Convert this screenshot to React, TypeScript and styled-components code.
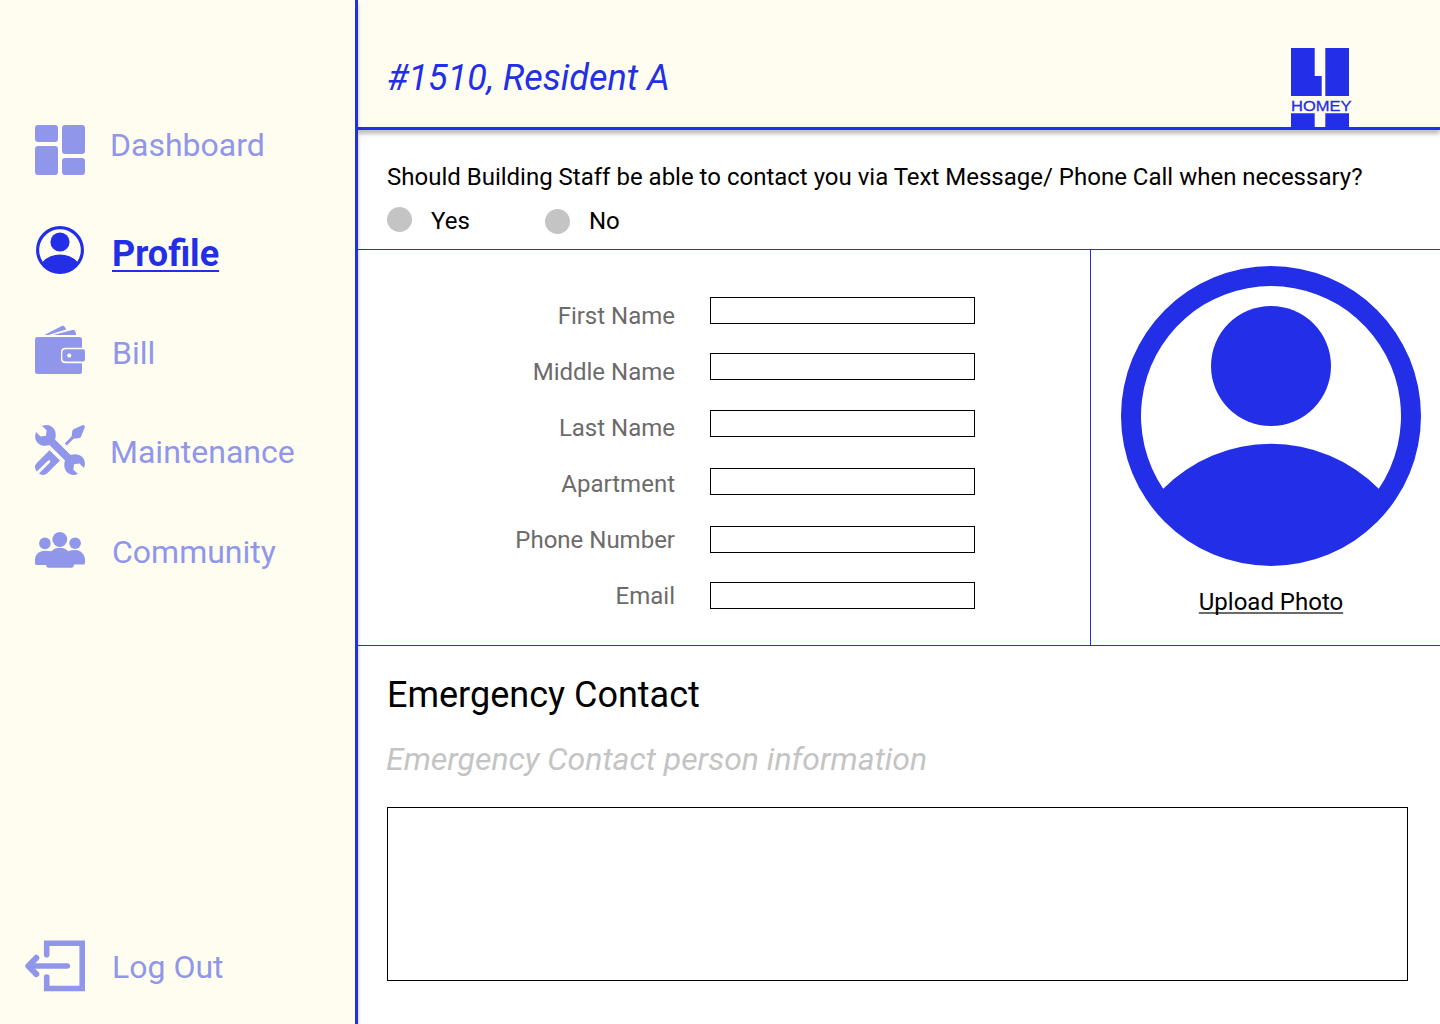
import React from 'react';
import styled, { createGlobalStyle } from 'styled-components';

const BLUE = '#222fe6';
const FADED = '#9097eb';
const CREAM = '#fffdf0';

const GlobalStyle = createGlobalStyle`
  * {
    box-sizing: border-box;
  }

  body {
    margin: 0;
    background: #fff;
    font-family: Roboto, 'Liberation Sans', sans-serif;
  }
`;

const Page = styled.div`
  display: flex;
  width: 1440px;
  height: 1024px;
  overflow: hidden;
`;

const Sidebar = styled.aside`
  position: relative;
  z-index: 1;
  display: flex;
  flex-direction: column;
  justify-content: space-between;
  width: 358px;
  padding: 100px 0 8px;
  background: ${CREAM};
  border-right: 3px solid ${BLUE};
  box-shadow: 0 4px 4px rgba(0, 0, 0, 0.25);
`;

const NavItem = styled.a<{ $active?: boolean }>`
  display: flex;
  align-items: center;
  height: 100px;
  color: ${props => (props.$active ? BLUE : FADED)};
  cursor: pointer;
`;

const NavIcon = styled.span`
  display: flex;
  justify-content: center;
  width: 50px;
  margin-left: 35px;

  svg {
    display: block;
    flex-shrink: 0;
  }
`;

const LogOutSlot = styled(NavIcon)`
  width: 60px;
  margin-left: 25px;
`;

const NavLabel = styled.span<{ $active?: boolean; $left?: number; $drop?: number }>`
  margin-left: ${props => props.$left || 27}px;
  padding-top: ${props => Math.max(props.$drop || 0, 0) * 2}px;
  padding-bottom: ${props => Math.max(-(props.$drop || 0), 0) * 2}px;
  font-size: ${props => (props.$active ? 36 : 32)}px;
  font-weight: ${props => (props.$active ? 700 : 400)};
  line-height: ${props => (props.$active ? 42 : 38)}px;
  text-decoration: ${props => (props.$active ? 'underline' : 'none')};
  text-decoration-thickness: 2px;
  text-underline-offset: 4px;
`;

const Main = styled.main`
  display: flex;
  flex-direction: column;
  flex: 1;
`;

const Header = styled.header`
  display: flex;
  justify-content: space-between;
  height: 130px;
  padding: 48px 87px 0 29px;
  background: ${CREAM};
  border-bottom: 3px solid ${BLUE};
  box-shadow: 0 4px 4px rgba(0, 0, 0, 0.25);
`;

const Title = styled.h1`
  margin: 9px 0 0;
  color: ${BLUE};
  font-size: 36px;
  font-style: italic;
  font-weight: 400;
  line-height: 42px;
`;

const LogoBox = styled.div`
  display: flex;
  flex-direction: column;
  width: 62px;
  color: ${BLUE};

  svg {
    display: block;
    flex-shrink: 0;
  }
`;

const LogoName = styled.span`
  height: 17px;
  font-family: 'Liberation Sans', Arial, sans-serif;
  font-size: 15px;
  line-height: 19px;
  transform: scaleX(1.1);
  transform-origin: left;
  -webkit-text-stroke: 0.3px ${BLUE};
`;

const Consent = styled.section`
  height: 120px;
  padding: 33px 29px 0;
  border-bottom: 1px solid ${BLUE};
`;

const Question = styled.p`
  margin: 0;
  font-size: 24px;
  line-height: 28px;
  white-space: nowrap;
`;

const Options = styled.div`
  display: flex;
  margin-top: 16px;
`;

const Option = styled.label<{ $dotTop: number }>`
  display: flex;
  width: 158px;
  font-size: 24px;
  line-height: 28px;

  &::before {
    content: '';
    width: 25px;
    height: 25px;
    margin: ${props => props.$dotTop}px 19px 0 0;
    border-radius: 50%;
    background: #c4c4c4;
  }
`;

const Details = styled.section`
  display: flex;
  height: 396px;
  border-bottom: 1px solid ${BLUE};
`;

const Form = styled.form`
  width: 733px;
  padding-top: 40px;
  border-right: 1px solid ${BLUE};
`;

const Field = styled.label`
  display: flex;
  align-items: flex-start;
  height: 56px;
`;

const FieldName = styled.span`
  width: 317px;
  padding-top: 12px;
  color: #6b6b6b;
  font-size: 24px;
  line-height: 28px;
  text-align: right;
`;

const Input = styled.input<{ $top: number }>`
  width: 265px;
  height: 27px;
  margin: ${props => props.$top}px 0 0 35px;
  padding: 0 6px;
  border: 1px solid #000;
  border-radius: 0;
  background: #fff;
  font: 18px Roboto, sans-serif;
`;

const Photo = styled.div`
  display: flex;
  flex: 1;
  flex-direction: column;
  align-items: center;
  padding: 16px 0 0 11px;
  color: ${BLUE};
`;

const Upload = styled.a`
  margin-top: 22px;
  color: #000;
  font-size: 24px;
  line-height: 28px;
  text-decoration: underline 2px #6b6b6b;
  text-decoration-skip-ink: none;
  text-underline-offset: 2px;
`;

const Emergency = styled.section`
  padding: 28px 32px 0 29px;
`;

const Heading = styled.h2`
  margin: 0;
  font-size: 36px;
  font-weight: 400;
  line-height: 42px;
`;

const Hint = styled.p`
  margin: 24px 0 0 -1px;
  color: #c4c4c4;
  font-size: 32px;
  font-style: italic;
  line-height: 38px;
`;

const TextArea = styled.textarea`
  display: block;
  width: 1021px;
  height: 174px;
  margin-top: 29px;
  padding: 10px;
  border: 1px solid #000;
  border-radius: 0;
  background: #fff;
  font: 24px Roboto, sans-serif;
  resize: none;
`;

const DashboardIcon = () => (
  <svg width="50" height="50" viewBox="0 0 50 50" fill="currentColor">
    <rect width="23" height="17" rx="3" />
    <rect y="21" width="23" height="29" rx="3" />
    <rect x="27" width="23" height="29" rx="3" />
    <rect x="27" y="33" width="23" height="17" rx="3" />
  </svg>
);

const PersonIcon = ({ size }: { size: number }) => (
  <svg width={size} height={size} viewBox="0 0 30 30" fill="currentColor">
    <path
      fillRule="evenodd"
      d="M15 0a15 15 0 1 1 0 30a15 15 0 1 1 0-30zM4.22 22.27A15.2 15.2 0 0 1 25.78 22.27A13 13 0 1 0 4.22 22.27z"
    />
    <circle cx="15" cy="10" r="6" />
  </svg>
);

const WalletIcon = () => (
  <svg width="50" height="50" viewBox="0 0 50 50" fill="currentColor">
    <path d="M9.3 10L26.8 1.1Q28.7 .2 29.8 1.9L31.2 4.5L13.5 10z" />
    <path d="M18 10L37.3 4.9Q39.6 4.3 40.3 6.5L41.2 10z" />
    <path d="M2.5 12H44.5Q47 12 47 14.5V22.7H30.5Q26 22.7 26 27V34Q26 38.3 30.5 38.3H47V46.5Q47 49 44.5 49H2.5Q0 49 0 46.5V14.5Q0 12 2.5 12z" />
    <path
      fillRule="evenodd"
      d="M31 24.3H48Q50 24.3 50 26.5V34.2Q50 36.5 48 36.5H31Q27.3 36.5 27.3 33V27.8Q27.3 24.3 31 24.3zM34.3 28.5a2.1 2.1 0 1 0 0 4.2a2.1 2.1 0 1 0 0-4.2z"
    />
  </svg>
);

const ToolsIcon = () => (
  <svg width="50" height="50" viewBox="0 0 50 50" fill="currentColor">
    <path d="M7 1C12-.8 15.5 .3 18.2 3C20.8 5.7 21.4 10 20 14.4L35.6 30C40 28.6 44.3 29.2 47 31.8C49.7 34.5 50.8 38 49 43L44.4 38.6L39 39.2L38.4 44.7L43 49C38 50.8 34.5 49.7 31.8 47C29.2 44.3 28.6 40 30 35.6L14.4 20C10 21.4 5.7 20.8 3 18.2C.3 15.5-.8 12 1 7L5.6 11.4L11 10.8L11.6 5.3z" />
    <path d="M47.8 .1L38.6 4.2Q37.5 4.8 37.3 6L36.6 11.5L29.7 18.4L31.8 20.5L38.6 13.7L44.6 13Q45.6 12.8 46 11.7L49.8 2.3Q50.2 .1 47.8 .1z" />
    <path d="M14.5 25.2L25 35.5L12.3 48.2Q9.5 51 5.2 49.3L4 48.5L14.9 37.4Q15.8 35.9 14.7 35.3Q13.8 34.9 12.9 35.8L1.8 46.5Q-1.7 42 1.3 38.4z" />
  </svg>
);

const CommunityIcon = () => (
  <svg width="50" height="36" viewBox="0 0 50 36" fill="currentColor">
    <circle cx="24.8" cy="7.5" r="7.4" />
    <circle cx="9.9" cy="11.4" r="5.8" />
    <circle cx="40.1" cy="11.2" r="5.8" />
    <path d="M1.5 33Q0 33 0 31.5V28C0 22.5 4.2 18.7 9.8 18.7Q13.5 18.7 16.3 19.2Q20 15.8 24.8 15.8Q30 15.8 33.3 19.2Q36 18 40.2 18C45.8 18 50 22.5 50 28V31Q50 32.5 48.5 32.5H39Q38.5 35.8 36.5 35.8H13.5Q11.3 35.8 11.2 33z" />
  </svg>
);

const LogOutIcon = () => (
  <svg
    width="60"
    height="52"
    viewBox="0 0 60 52"
    fill="none"
    stroke="currentColor"
    strokeWidth="5.6"
    strokeLinecap="round"
  >
    <path d="M21.7 14.7V3.3H57.2V48.5H21.7V37" />
    <path d="M42.3 26H4" />
    <path d="M11.3 17.8L3.3 26L11.3 34.2" strokeWidth="6" strokeLinejoin="round" />
  </svg>
);

const Logo = () => (
  <LogoBox>
    <svg width="58" height="48" viewBox="0 0 58 48" fill="currentColor">
      <path d="M0 0H23.7V28H30.7V48H0zM34.3 0H58V48H34.3z" />
    </svg>
    <LogoName>HOMEY</LogoName>
    <svg width="58" height="14" viewBox="0 0 58 14" fill="currentColor">
      <path d="M0 .3H23.7V14H0zM34.3 .3H58V14H34.3z" />
    </svg>
  </LogoBox>
);

const links = [
  { label: 'Dashboard', icon: <DashboardIcon />, left: 25, drop: -5 },
  { label: 'Profile', icon: <PersonIcon size={48} />, left: 27, drop: 4, active: true },
  { label: 'Bill', icon: <WalletIcon />, left: 27, drop: 3 },
  { label: 'Maintenance', icon: <ToolsIcon />, left: 25, drop: 2 },
  { label: 'Community', icon: <CommunityIcon />, left: 27, drop: 2 },
];

const fields = [
  { name: 'First Name', top: 7 },
  { name: 'Middle Name', top: 7 },
  { name: 'Last Name', top: 8 },
  { name: 'Apartment', top: 10 },
  { name: 'Phone Number', top: 12 },
  { name: 'Email', top: 12 },
];

const App = () => (
  <Page>
    <GlobalStyle />
    <Sidebar>
      <nav>
        {links.map(link => (
          <NavItem key={link.label} $active={link.active}>
            <NavIcon>{link.icon}</NavIcon>
            <NavLabel $active={link.active} $left={link.left} $drop={link.drop}>
              {link.label}
            </NavLabel>
          </NavItem>
        ))}
      </nav>
      <NavItem>
        <LogOutSlot><LogOutIcon /></LogOutSlot>
        <NavLabel $drop={1}>Log Out</NavLabel>
      </NavItem>
    </Sidebar>
    <Main>
      <Header>
        <Title>#1510, Resident A</Title>
        <Logo />
      </Header>
      <Consent>
        <Question>
          Should Building Staff be able to contact you via Text Message/ Phone Call when necessary?
        </Question>
        <Options>
          <Option $dotTop={0}>Yes</Option>
          <Option $dotTop={2}>No</Option>
        </Options>
      </Consent>
      <Details>
        <Form>
          {fields.map(field => (
            <Field key={field.name}>
              <FieldName>{field.name}</FieldName>
              <Input $top={field.top} />
            </Field>
          ))}
        </Form>
        <Photo>
          <PersonIcon size={300} />
          <Upload>Upload Photo</Upload>
        </Photo>
      </Details>
      <Emergency>
        <Heading>Emergency Contact</Heading>
        <Hint>Emergency Contact person information</Hint>
        <TextArea />
      </Emergency>
    </Main>
  </Page>
);

export default App;
